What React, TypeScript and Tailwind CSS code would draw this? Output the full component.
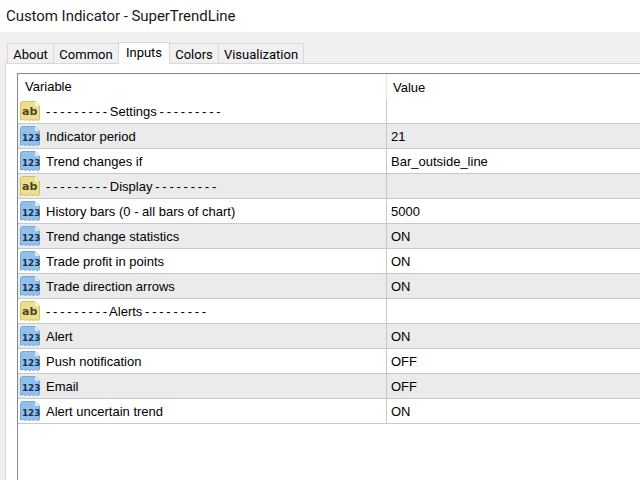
const rows: { kind: "ab" | "num"; name: string; value: string; sep?: boolean }[] = [
  { kind: "ab", name: "- - - - - - - - - Settings - - - - - - - - -", value: "", sep: true },
  { kind: "num", name: "Indicator period", value: "21" },
  { kind: "num", name: "Trend changes if", value: "Bar_outside_line" },
  { kind: "ab", name: "- - - - - - - - - Display - - - - - - - - -", value: "", sep: true },
  { kind: "num", name: "History bars (0 - all bars of chart)", value: "5000" },
  { kind: "num", name: "Trend change statistics", value: "ON" },
  { kind: "num", name: "Trade profit in points", value: "ON" },
  { kind: "num", name: "Trade direction arrows", value: "ON" },
  { kind: "ab", name: "- - - - - - - - - Alerts - - - - - - - - -", value: "", sep: true },
  { kind: "num", name: "Alert", value: "ON" },
  { kind: "num", name: "Push notification", value: "OFF" },
  { kind: "num", name: "Email", value: "OFF" },
  { kind: "num", name: "Alert uncertain trend", value: "ON" },
];

const tabs = [
  { label: "About", w: "w-[47px]" },
  { label: "Common", w: "w-[65px]" },
  { label: "Inputs", w: "w-[52px]" },
  { label: "Colors", w: "w-[49px]" },
  { label: "Visualization", w: "w-[85px]" },
];

function TypeIcon({ kind }: { kind: "ab" | "num" }) {
  const ab = kind === "ab";
  return (
    <svg width="22" height="22" viewBox="0 0 22 22" className="shrink-0">
      <path
        d="M1.5 4 Q1.5 1.5 4 1.5 H16 L20.5 6 V19.5 L18.5 20.5 L16.5 19.5 L14.5 20.5 L12.5 19.5 L10.5 20.5 L8.5 19.5 L6.5 20.5 L4.5 19.5 L1.5 20 Z"
        fill={ab ? "#ecdf8f" : "#92c0ea"}
        stroke={ab ? "#d2c06a" : "#76a8d8"}
        strokeWidth="1"
      />
      <path d="M16 1.5 V6 H20.5 Z" fill={ab ? "#fbf6d2" : "#dcebf9"} />
      <text
        x="3"
        y={ab ? 15 : 15.5}
        fontSize={ab ? 11 : 8.8}
        fontWeight="700"
        fill={ab ? "#4a4526" : "#12304f"}
        fontFamily="'DejaVu Sans', sans-serif"
      >
        {ab ? "ab" : "123"}
      </text>
    </svg>
  );
}

export default function App() {
  return (
    <div className="w-[640px] h-[480px] overflow-hidden bg-white flex flex-col font-['Liberation_Sans',sans-serif] text-[13px] text-black">
      <div className="h-8 shrink-0 pl-[6px] flex items-center text-[15px] tracking-[-0.05px] text-[#1a1a1a] font-['Roboto',sans-serif]">
        Custom Indicator - SuperTrendLine
      </div>

      <div className="flex-1 min-h-0 bg-[#f0f0f0] pt-[10px] pl-[5px] flex flex-col">
        <div className="h-[21px] shrink-0 pl-[2px] flex items-end relative z-10 font-['Roboto',sans-serif] text-[13px]">
          {tabs.map((t) =>
            t.label === "Inputs" ? (
              <div key={t.label} className={`${t.w} h-[22px] mb-[-1px] ml-[-1px] pt-[1px] text-center bg-white border border-b-0 border-[#d9d9d9] leading-[18px]`}>
                {t.label}
              </div>
            ) : (
              <div key={t.label} className={`${t.w} h-[20px] text-center bg-[#f0f0f0] border border-b-0 border-l-0 first:border-l border-[#d9d9d9] leading-[21px]`}>
                {t.label}
              </div>
            ),
          )}
        </div>

        <div className="flex-1 min-h-0 bg-white border-t border-l border-[#d9d9d9] pt-[9px] pl-[11px]">
          <div className="h-full border-t border-l border-[#828790]">
            <div className="h-[25px] flex items-center">
              <div className="w-[369px] pl-[7px] pt-[2px] border-r border-[#e5e5e5] h-[24px] self-start flex items-center">Variable</div>
              <div className="pl-[6px] pt-[2px]">Value</div>
            </div>
            {rows.map((r, i) => (
              <div
                key={i}
                className={`h-[25px] flex border-b border-[#c8c8c8] ${i % 2 === 1 ? "bg-[#ebebeb]" : "bg-white"}`}
              >
                <div className="w-[369px] pl-[1px] flex items-center gap-[5px] border-r border-[#c8c8c8]">
                  <TypeIcon kind={r.kind} />
                  <span className={`whitespace-nowrap pt-[2px] ${r.sep ? "[word-spacing:-0.85px]" : ""}`}>{r.name}</span>
                </div>
                <div className="pl-[4px] pt-[2px] flex items-center">{r.value}</div>
              </div>
            ))}
          </div>
        </div>
      </div>
    </div>
  );
}
